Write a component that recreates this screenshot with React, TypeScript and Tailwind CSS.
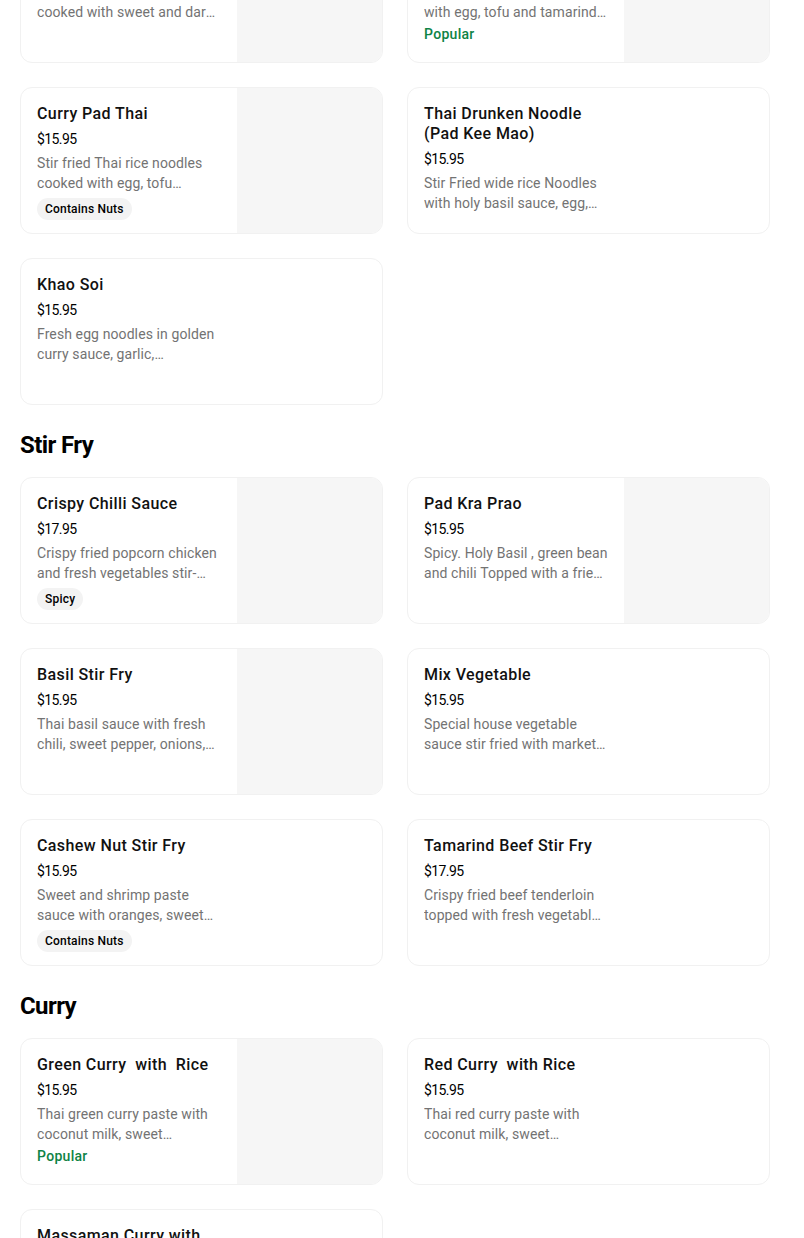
import React from 'react';

type Item = {
  name: string;
  price: string;
  desc: string;
  image?: boolean;
  tag?: string;
  popular?: boolean;
};

type Section = {
  title: string;
  items: Item[];
};

const sections: Section[] = [
  {
    title: 'Noodles',
    items: [
      {
        name: 'Pad See Ew',
        price: '$15.95',
        desc: 'Stir fried wide rice noodles cooked with sweet and dark soy sauce, egg and broccoli',
        image: true,
      },
      {
        name: 'Pad Thai',
        price: '$15.95',
        desc: 'Thai rice noodles stir fried with egg, tofu and tamarind sauce, bean sprouts and peanuts',
        image: true,
        popular: true,
      },
      {
        name: 'Curry Pad Thai',
        price: '$15.95',
        desc: 'Stir fried Thai rice noodles cooked with egg, tofu vegetables and yellow curry powder',
        image: true,
        tag: 'Contains Nuts',
      },
      {
        name: 'Thai Drunken Noodle (Pad Kee Mao)',
        price: '$15.95',
        desc: 'Stir Fried wide rice Noodles with holy basil sauce, egg, tomatoes and bell peppers',
      },
      {
        name: 'Khao Soi',
        price: '$15.95',
        desc: 'Fresh egg noodles in golden curry sauce, garlic, lemongrass and pickled mustard greens',
      },
    ],
  },
  {
    title: 'Stir Fry',
    items: [
      {
        name: 'Crispy Chilli Sauce',
        price: '$17.95',
        desc: 'Crispy fried popcorn chicken and fresh vegetables stir-fried in sweet chilli sauce',
        image: true,
        tag: 'Spicy',
      },
      {
        name: 'Pad Kra Prao',
        price: '$15.95',
        desc: 'Spicy. Holy Basil , green bean and chili Topped with a fried egg',
        image: true,
      },
      {
        name: 'Basil Stir Fry',
        price: '$15.95',
        desc: 'Thai basil sauce with fresh chili, sweet pepper, onions, mushrooms and green beans',
        image: true,
      },
      {
        name: 'Mix Vegetable',
        price: '$15.95',
        desc: 'Special house vegetable sauce stir fried with market vegetables of the season',
      },
      {
        name: 'Cashew Nut Stir Fry',
        price: '$15.95',
        desc: 'Sweet and shrimp paste sauce with oranges, sweet peppers, onions and roasted cashews',
        tag: 'Contains Nuts',
      },
      {
        name: 'Tamarind Beef Stir Fry',
        price: '$17.95',
        desc: 'Crispy fried beef tenderloin topped with fresh vegetables and tamarind sauce',
      },
    ],
  },
  {
    title: 'Curry',
    items: [
      {
        name: 'Green Curry\u00a0 with\u00a0 Rice',
        price: '$15.95',
        desc: 'Thai green curry paste with coconut milk, sweet vegetables, bamboo shoots and basil',
        image: true,
        popular: true,
      },
      {
        name: 'Red Curry\u00a0 with Rice',
        price: '$15.95',
        desc: 'Thai red curry paste with coconut milk, sweet vegetables, bamboo shoots and basil',
      },
      {
        name: 'Massaman Curry with Rice',
        price: '$15.95',
        desc: 'Massaman curry paste with coconut milk, potatoes, onions and roasted peanuts',
      },
    ],
  },
];

const MenuCard: React.FC<{ item: Item }> = ({ item }) => (
  <div className="flex h-[147px] overflow-hidden rounded-xl border border-[#f1f1f1] bg-white">
    <div className="flex w-[216px] shrink-0 flex-col px-4 pt-4">
      <div className="text-[16px] font-medium leading-5 tracking-[0.4px] text-[#111]">{item.name}</div>
      <div className="mt-[5px] text-[14px] leading-5 tracking-[-0.6px] text-black">{item.price}</div>
      <div className="mt-1 line-clamp-2 shrink-0 text-[14px] leading-5 tracking-[0.1px] text-[#737373]">
        {item.desc}
      </div>
      {item.tag && (
        <div className="mt-[5px] flex shrink-0">
          <span className="flex h-[22px] items-center rounded-full bg-[#f3f3f3] px-2 text-[12px] font-medium tracking-[0.2px] text-black">
            {item.tag}
          </span>
        </div>
      )}
      {item.popular && (
        <div className="mt-[2px] shrink-0 text-[14px] font-medium leading-5 tracking-[0.3px] text-[#0e8345]">
          Popular
        </div>
      )}
    </div>
    {item.image ? <div className="flex-1 bg-[#f6f6f6]" /> : <div className="flex-1" />}
  </div>
);

export default function App() {
  return (
    <div className="h-[1238px] w-[804px] overflow-hidden bg-white font-['Roboto',sans-serif]">
      <div className="-mt-[132px] w-[770px] pl-5">
        {sections.map((section, i) => (
          <section key={section.title} className={i === 0 ? '' : 'mt-6'}>
            <h2 className="mb-4 text-[24px] font-bold leading-8 tracking-tight text-black">
              {section.title}
            </h2>
            <div className="grid grid-cols-2 gap-6">
              {section.items.map((item) => (
                <MenuCard key={item.name} item={item} />
              ))}
            </div>
          </section>
        ))}
      </div>
    </div>
  );
}
